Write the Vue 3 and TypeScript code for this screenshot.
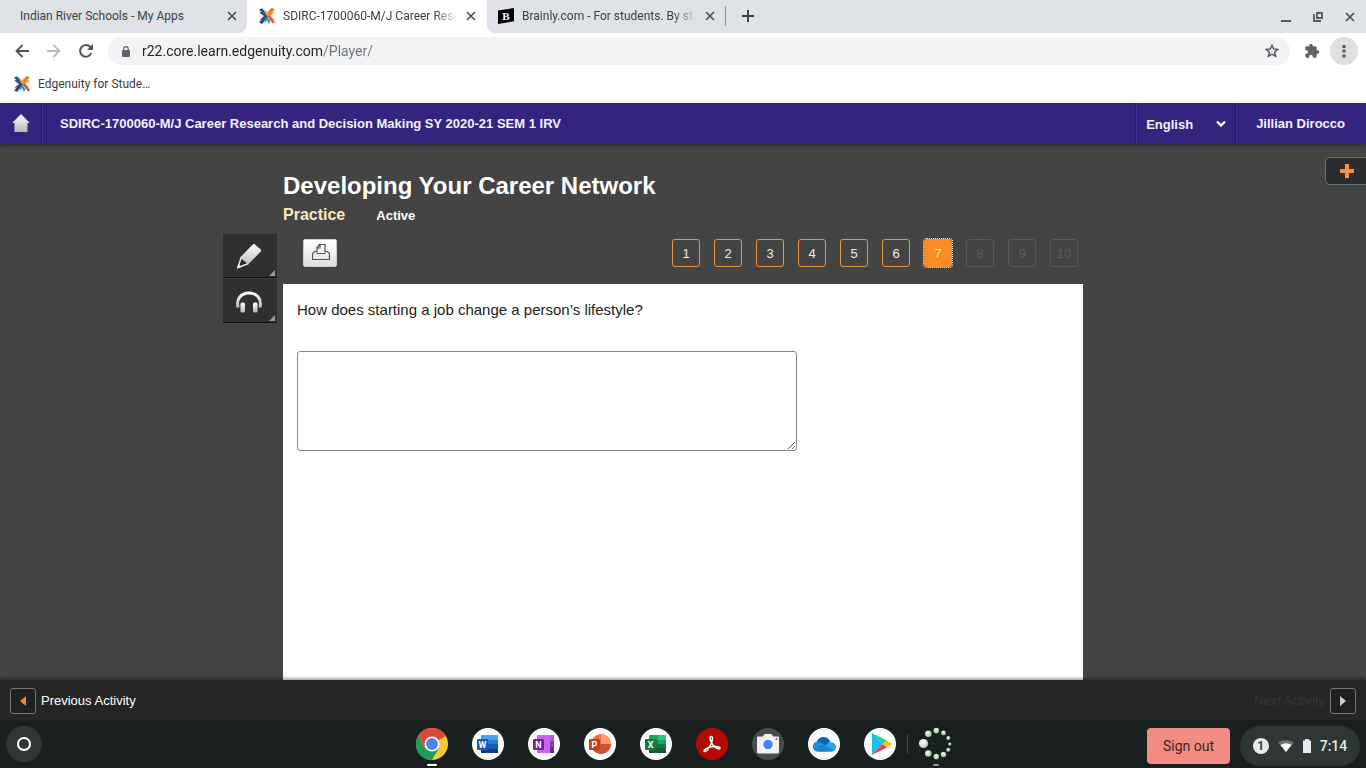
<script setup lang="ts">
import { ref } from 'vue'

interface Tab {
  title: string
  icon: 'none' | 'edgenuity' | 'brainly'
  active: boolean
}

interface Question {
  n: number
  state: 'open' | 'current' | 'locked'
}

const tabs: Tab[] = [
  { title: 'Indian River Schools - My Apps', icon: 'none', active: false },
  { title: 'SDIRC-1700060-M/J Career Rese', icon: 'edgenuity', active: true },
  { title: 'Brainly.com - For students. By st', icon: 'brainly', active: false },
]

const questions: Question[] = Array.from({ length: 10 }, (_, i) => ({
  n: i + 1,
  state: i < 6 ? 'open' : i === 6 ? 'current' : 'locked',
}))

const apps: string[] = ['Chrome', 'Word', 'OneNote', 'PowerPoint', 'Excel', 'Acrobat', 'Camera', 'OneDrive', 'Play Store', 'Loading app']

const dots = [
  { x: 3.5, y: 15.5, r: 4.6 },
  { x: 8.3, y: 5.8, r: 3.3 },
  { x: 16.3, y: 2.6, r: 2.8 },
  { x: 23.5, y: 4.9, r: 2.4 },
  { x: 28.3, y: 10, r: 2 },
  { x: 29.8, y: 16, r: 1.6 },
  { x: 28.3, y: 21.8, r: 2 },
  { x: 23.5, y: 26.5, r: 2.7 },
  { x: 16.3, y: 28.6, r: 2.8 },
  { x: 8.3, y: 25.5, r: 3.3 },
]

const url = ref('r22.core.learn.edgenuity.com/Player/')
const language = ref('English')
const answer = ref('')
</script>

<template>
  <div class="screen">
    <svg class="defs" width="0" height="0" aria-hidden="true">
      <defs>
        <symbol id="edge" viewBox="0 0 16 16">
          <path d="M0 1.5 3.2.3 7.7 6 6 8.2z" fill="#28567b" />
          <path d="M0 4.5 5 8 0 12.2 3.4 11 7 8 3 4z" fill="#3b4a8b" />
          <path d="M16 1 12.4 0 8 5.8 10 8.2z" fill="#ee7a31" />
          <path d="M16 4.2 10.8 8l5.2 3.8-3.5-.5L9 8l3.6-3.4z" fill="#f0913f" />
          <path d="M0 14.4 3.2 16 9 8.2 7.4 6z" fill="#314778" />
          <path d="M5 16 8 7.8l3.4 5.6L10 16 8 12.3z" fill="#25a3a5" />
          <path d="M8.2 8 14 15.7l2-1.8-5-6.5z" fill="#e35542" />
          <path d="M5 1 8 4.4 11 1 9.8 5.6 8 7.8 6.3 5.7z" fill="#e8a23d" />
        </symbol>
        <symbol id="cross" viewBox="0 0 10 10">
          <path d="M1 1l8 8M9 1 1 9" stroke="#45494d" stroke-width="1.6" fill="none" />
        </symbol>
        <linearGradient id="silver" x1="0" y1="0" x2="0" y2="1">
          <stop offset="0" stop-color="#fff" />
          <stop offset="1" stop-color="#b8b8b8" />
        </linearGradient>
        <radialGradient id="pearl" cx=".4" cy=".35" r=".7">
          <stop offset="0" stop-color="#fff" />
          <stop offset=".6" stop-color="#dfe0df" />
          <stop offset="1" stop-color="#a9b0aa" />
        </radialGradient>
        <radialGradient id="greenPearl" cx=".4" cy=".35" r=".7">
          <stop offset="0" stop-color="#f4fff3" />
          <stop offset="1" stop-color="#8fc08e" />
        </radialGradient>
      </defs>
    </svg>

    <div class="tabstrip">
      <div v-for="t in tabs" :key="t.title" class="tab" :class="{ active: t.active }">
        <svg v-if="t.icon === 'edgenuity'" class="favicon" viewBox="0 0 16 16"><use href="#edge" /></svg>
        <svg v-else-if="t.icon === 'brainly'" class="favicon" viewBox="0 0 16 16">
          <path d="M0 2.5 16 0v13.2L0 16z" fill="#000" />
          <text x="8" y="12" text-anchor="middle" class="serif-mark">B</text>
        </svg>
        <span class="tab-title" :class="{ fade: t.icon !== 'none' }">{{ t.title }}</span>
        <button class="plain close" aria-label="Close tab"><svg width="10" height="10"><use href="#cross" /></svg></button>
      </div>
      <button class="plain new-tab" aria-label="New tab">
        <svg width="12" height="12" viewBox="0 0 12 12"><path d="M6 0v12M0 6h12" stroke="#3c4043" stroke-width="2" /></svg>
      </button>
      <div class="window-buttons">
        <button class="plain" aria-label="Minimize"><svg width="10" height="12" viewBox="0 0 10 12"><path d="M0 10h10" stroke="#55595d" stroke-width="2" /></svg></button>
        <button class="plain" aria-label="Restore"><svg width="10" height="10" viewBox="0 0 10 10"><path d="M4 1h5v5H4zM1 2v7h7" stroke="#55595d" stroke-width="1.8" fill="none" /></svg></button>
        <button class="plain" aria-label="Close window"><svg width="10" height="10"><use href="#cross" /></svg></button>
      </div>
    </div>

    <div class="toolbar">
      <button class="plain nav" aria-label="Back"><svg width="14" height="14" viewBox="0 0 14 14"><path d="M14 7H1.5M7.5 1l-6 6 6 6" stroke="#505458" stroke-width="1.8" fill="none" /></svg></button>
      <button class="plain nav" aria-label="Forward"><svg width="14" height="14" viewBox="0 0 14 14"><path d="M0 7h12.5M6.5 1l6 6-6 6" stroke="#babcbe" stroke-width="1.8" fill="none" /></svg></button>
      <button class="plain nav" aria-label="Reload"><svg width="14" height="14" viewBox="0 0 14 14"><path d="M12.3 9.1A5.8 5.8 0 1 1 11.3 3L12 3.8" stroke="#505458" stroke-width="2" fill="none" /><path d="M14 0v6H8z" fill="#505458" /></svg></button>
      <div class="omnibox">
        <svg width="8" height="11" viewBox="0 0 8 11"><rect y="4" width="8" height="7" rx="1" fill="#5f6368" /><path d="M1.8 5V2.8a2.2 2.2 0 0 1 4.4 0V5" stroke="#5f6368" stroke-width="1.2" fill="none" /></svg>
        <div class="address">
          <input v-model="url" class="url" aria-label="Address" spellcheck="false" />
        </div>
        <button class="plain star" aria-label="Bookmark this page"><svg width="14" height="14" viewBox="0 0 14 14"><path d="M7 1.2 8.7 5l4.2.4-3.2 2.8 1 4.1L7 10.1l-3.7 2.2 1-4.1L1.1 5.4 5.3 5z" stroke="#505458" stroke-width="1.4" fill="none" /></svg></button>
      </div>
      <button class="plain nav ext" aria-label="Extensions"><svg width="16" height="16" viewBox="0 0 24 24"><path fill="#5f6368" d="M20.5 11H19V7c0-1.1-.9-2-2-2h-4V3.5a2.5 2.5 0 0 0-5 0V5H4c-1.1 0-2 .9-2 2v3.8h1.500a2.700 2.700 0 0 1 0 5.400H2V20c0 1.100.9 2 2 2h3.800v-1.500a2.700 2.700 0 0 1 5.400 0V22H17c1.100 0 2-.9 2-2v-4h1.500a2.500 2.500 0 0 0 0-5z" /></svg></button>
      <button class="plain more" aria-label="Browser menu"><svg width="4" height="14" viewBox="0 0 4 14"><path d="M.5 1h3v3h-3zM.5 5.500h3v3h-3zM.5 10.500h3v3h-3z" fill="#55595d" /></svg></button>
    </div>

    <div class="bookmarks">
      <a href="#" class="bookmark"><svg class="favicon" viewBox="0 0 16 16"><use href="#edge" /></svg>Edgenuity for Stude…</a>
    </div>

    <header class="course-bar">
      <a href="#" class="home" aria-label="Home"><svg width="18" height="18" viewBox="0 0 18 18"><path d="M9 0 18 9h-2.500v9h-13V9H0z" fill="url(#silver)" /></svg></a>
      <span class="course">SDIRC-1700060-M/J Career Research and Decision Making SY 2020-21 SEM 1 IRV</span>
      <div class="language">
        <select v-model="language" aria-label="Language">
          <option>English</option>
          <option>Español</option>
        </select>
        <svg width="10" height="8" viewBox="0 0 10 8"><path d="M1 1.500l4 4 4-4" stroke="#fff" stroke-width="2.400" fill="none" /></svg>
      </div>
      <a href="#" class="user">Jillian Dirocco</a>
    </header>

    <main class="stage">
      <button class="plain add" aria-label="Open tools"><svg width="14" height="14" viewBox="0 0 14 14"><path d="M5 0h4v5h5v4H9v5H5V9H0V5h5z" fill="#f39443" /></svg></button>
      <div class="columns">
        <div class="rail">
          <button class="plain tool" aria-label="Highlighter">
            <svg width="26" height="26" viewBox="0 0 26 26"><path d="m19 1.500 5.500 4.800c.8.700.8 1.700.1 2.400L13 20.500 8 22.500 4 17l2-4.500L16.500 1.800c.8-.8 1.700-1 2.500-.3z" fill="url(#silver)" /><path d="m4.500 15 8 6.500L2 25z" fill="#292929" /><path d="M5.500 13.500 2 24.500l10.500-4" stroke="#e4e4e4" stroke-width="1.500" fill="none" /><path d="m1 25.500 1.300-4.500 3 3z" fill="#fff" /></svg>
            <span class="corner"></span>
          </button>
          <button class="plain tool" aria-label="Read aloud">
            <svg width="26" height="22" viewBox="0 0 26 22"><path d="M2.200 16.500C-.4 8 5.500 2 13 2s13.400 6 10.800 14.500" stroke="url(#silver)" stroke-width="3" fill="none" /><rect x="4.500" y="11.500" width="4.500" height="10" rx="1.500" fill="url(#silver)" /><rect x="17" y="11.500" width="4.500" height="10" rx="1.500" fill="url(#silver)" /></svg>
            <span class="corner"></span>
          </button>
        </div>
        <section class="lesson">
          <h1>Developing Your Career Network</h1>
          <div class="sub"><h2>Practice</h2><span>Active</span></div>
          <div class="controls">
            <button class="plain print" aria-label="Print"><svg width="18" height="16" viewBox="0 0 18 16"><path d="M5 8.500V3.500l2.500-3H13v8M5 4h3V.5M4.500 7.500h-2l-2 2v6h17v-6l-2-2h-2M4.500 9.500h9" stroke="#505050" stroke-width="1.200" fill="none" /></svg></button>
            <nav class="questions" aria-label="Questions">
              <button v-for="q in questions" :key="q.n" class="plain question" :class="q.state" :disabled="q.state === 'locked'">{{ q.n }}</button>
            </nav>
          </div>
          <div class="paper">
            <label for="answer">How does starting a job change a person’s lifestyle?</label>
            <textarea id="answer" v-model="answer"></textarea>
          </div>
        </section>
      </div>
    </main>

    <footer class="activity-bar">
      <button class="plain step"><span class="step-box"><svg width="6" height="10" viewBox="0 0 6 10"><path d="M6 0v10L0 5z" fill="#ef8634" /></svg></span>Previous Activity</button>
      <button class="plain step next" disabled>Next Activity<span class="step-box"><svg width="6" height="10" viewBox="0 0 6 10"><path d="M0 0v10l6-5z" fill="#d0d0d0" /></svg></span></button>
    </footer>

    <div class="shelf">
      <button class="plain launcher" aria-label="Launcher"><span></span></button>
      <div class="apps">
        <button v-for="a in apps" :key="a" class="plain app" :class="{ running: a === 'Chrome', loading: a === 'Loading app' }" :aria-label="a">
          <svg width="32" height="32" viewBox="0 0 32 32">
            <g v-if="a === 'Chrome'">
              <circle cx="16" cy="16" r="16" fill="#fcc934" />
              <path d="M16 16 2.140 8A16 16 0 0 1 29.860 8z" fill="#d9493c" />
              <path d="M16 8h13.860A16 16 0 0 0 2.140 8L9 20z" fill="#d9493c" />
              <path d="M2.140 8A16 16 0 0 0 16 32l7-12-7 3-7-3z" fill="#25995a" />
              <circle cx="16" cy="16" r="7.500" fill="#fff" /><circle cx="16" cy="16" r="5.900" fill="#4a86e8" />
            </g>
            <g v-else-if="a === 'Word'">
              <circle cx="16" cy="16" r="16" fill="#fff" /><rect x="9" y="7" width="17" height="18" rx="1" fill="#185abd" /><path d="M9 7h17v5H9z" fill="#41a5ee" /><path d="M9 12h17v4H9z" fill="#2b7cd3" /><path d="M9 21h17v4H9z" fill="#103f91" /><rect x="5" y="11" width="11" height="11" rx="1" fill="#185abd" /><text x="10.500" y="19.500" text-anchor="middle" class="mark">W</text>
            </g>
            <g v-else-if="a === 'OneNote'">
              <circle cx="16" cy="16" r="16" fill="#fff" /><rect x="9" y="7" width="17" height="18" rx="1" fill="#ca64ea" /><path d="M22 7h4v6h-4z" fill="#b757dc" /><path d="M22 13h4v6h-4z" fill="#9332bf" /><path d="M22 19h4v6h-4z" fill="#7719aa" /><rect x="5" y="11" width="11" height="11" rx="1" fill="#7719aa" /><text x="10.500" y="19.500" text-anchor="middle" class="mark">N</text>
            </g>
            <g v-else-if="a === 'PowerPoint'">
              <circle cx="16" cy="16" r="16" fill="#fff" /><circle cx="17" cy="16" r="10" fill="#ed6c47" /><path d="M17 6a10 10 0 0 1 10 10H17z" fill="#ff9c78" /><path d="M7 16h20a10 10 0 0 1-20 0z" fill="#d35230" /><rect x="5" y="11" width="11" height="11" rx="1" fill="#c43e1c" /><text x="10.500" y="19.500" text-anchor="middle" class="mark">P</text>
            </g>
            <g v-else-if="a === 'Excel'">
              <circle cx="16" cy="16" r="16" fill="#fff" /><rect x="9" y="7" width="17" height="18" rx="1" fill="#21a366" /><path d="M18 7h8v5h-8z" fill="#33c481" /><path d="M9 12h9v8H9z" fill="#107c41" /><path d="M9 20h17v5H9z" fill="#185c37" /><path d="M18 16h8v4h-8z" fill="#107c41" /><rect x="5" y="11" width="11" height="11" rx="1" fill="#107c41" /><text x="10.500" y="19.500" text-anchor="middle" class="mark">X</text>
            </g>
            <g v-else-if="a === 'Acrobat'">
              <circle cx="16" cy="16" r="16" fill="#b30b00" /><path d="M15 8.500c2.500 0 1.500 4.500-.5 8.500-2 4-4.500 7-6 6.500-1.800-1 2.500-4 7-4.700 4.300-.7 8.700-.2 8.500 1.400-.3 1.800-4.800-.2-7.200-3.200-2.200-2.700-3.800-8.500-1.800-8.500z" stroke="#fff" stroke-width="1.500" fill="none" />
            </g>
            <g v-else-if="a === 'Camera'">
              <circle cx="16" cy="16" r="16" fill="#4a4b4f" /><path d="M6 8.500h5L12.500 6h7L21 8.500h5a1 1 0 0 1 1 1V24a1.500 1.500 0 0 1-1.500 1.500h-19A1.500 1.500 0 0 1 5 24V9.500a1 1 0 0 1 1-1z" fill="#f1f1f1" /><circle cx="16" cy="16.500" r="6" fill="#fff" /><circle cx="16" cy="16.500" r="4.800" fill="#4285f4" /><circle cx="24.500" cy="11" r="1" fill="#6b7078" />
            </g>
            <g v-else-if="a === 'OneDrive'">
              <circle cx="16" cy="16" r="16" fill="#fff" /><path d="M9 14a7 7 0 0 1 12.500-2l1 3L15 20 7 14.500z" fill="#0364b8" /><path d="M9.500 13.500a6 6 0 0 1 4 1l10 6-5 3H10a5 5 0 0 1-.5-10z" fill="#1490df" /><path d="M20.500 13.500a4.500 4.500 0 0 1 3 1 4.500 4.500 0 0 1 .5 9H10l8-5z" fill="#28a8ea" /><path d="m15.500 16.500 10.500 6c-1 .8-1.500 1-3 1H10c-1.500 0-3-.8-3.800-2z" fill="#1686d2" /><path d="M9 14a7 7 0 0 1 12-2c-3 .5-4.500 2-5.500 4.500-1.500-1.500-3.500-2.800-6.500-2.500z" fill="#0868b7" />
            </g>
            <g v-else-if="a === 'Play Store'">
              <circle cx="16" cy="16" r="16" fill="#fff" /><path d="m8 5 10.500 11L8 27z" fill="#19bde9" /><path d="M8 5l15 7.500-4.500 4z" fill="#1fd4a2" /><path d="M8 27l15-7.500-4.500-3.500z" fill="#e53e58" /><path d="m23 12.500 5.500 3.500-5.500 3.500-4.500-3.500z" fill="#fbbc1c" />
            </g>
            <g v-else>
              <circle v-for="(d, i) in dots" :key="i" :cx="d.x" :cy="d.y" :r="d.r" :fill="i === 0 ? 'url(#pearl)' : 'url(#greenPearl)'" />
            </g>
          </svg>
        </button>
      </div>
      <div class="status">
        <button class="plain sign-out">Sign out</button>
        <button class="plain tray" aria-label="Status tray, 7:14">
          <span class="count">1</span>
          <svg width="16" height="12" viewBox="0 0 16 12"><path d="M0 2.500Q8-2 16 2.500L8 12z" fill="#6b7575" /><path d="M2.500 5Q8 1.500 13.500 5L8 12z" fill="#fff" /></svg>
          <svg width="8" height="14" viewBox="0 0 8 14"><path d="M2 0h4v1.500h2V14H0V1.500h2z" fill="#e8eaed" /></svg>
          <span class="time">7:14</span>
        </button>
      </div>
    </div>
  </div>
</template>

<style>
body {
  margin: 0;
}
</style>

<style scoped>
.screen {
  display: flex;
  flex-direction: column;
  height: 100vh;
  overflow: hidden;
  font-family: Roboto, sans-serif;
  font-size: 12px;
  color: #3c4043;
  background: #fff;
}
.screen * {
  box-sizing: border-box;
}
.defs {
  position: absolute;
}
svg {
  display: block;
  flex: none;
}
a {
  color: inherit;
  text-decoration: none;
}
.plain {
  display: flex;
  align-items: center;
  justify-content: center;
  padding: 0;
  border: 0;
  background: none;
  font: inherit;
  color: inherit;
  cursor: pointer;
}
.serif-mark {
  font: bold 11px "Liberation Serif", serif;
  fill: #fff;
}
.mark {
  font: bold 9px Roboto, sans-serif;
  fill: #fff;
}
.favicon {
  width: 16px;
  height: 16px;
}

/* Browser frame */
.tabstrip {
  display: flex;
  flex: none;
  height: 33px;
  background: #fff;
}
.tab {
  display: flex;
  align-items: center;
  flex: 0 1 240px;
  min-width: 0;
  gap: 8px;
  padding: 0 10px 2px 11px;
  background: #dee1e6;
}
.tab:first-child {
  flex-basis: 247px;
  padding-left: 20px;
  border-bottom-right-radius: 8px;
}
.tab.active {
  padding-left: 12px;
  padding-right: 11px;
  background: #fff;
}
.tab:nth-child(3) {
  flex-basis: 238px;
  border-bottom-left-radius: 8px;
}
.tab-title {
  flex: 1;
  min-width: 0;
  overflow: hidden;
  white-space: nowrap;
}
.tab-title.fade {
  mask-image: linear-gradient(to left, transparent, #000 24px);
}
.close {
  width: 10px;
  height: 16px;
}
.new-tab {
  padding: 0 17px 2px;
  background: linear-gradient(#8a8d91, #8a8d91) 0 6px / 1px 20px no-repeat #dee1e6;
}
.window-buttons {
  display: flex;
  flex: 1;
  align-items: center;
  justify-content: flex-end;
  gap: 22px;
  padding-right: 11px;
  background: #dee1e6;
}
.toolbar {
  display: flex;
  flex: none;
  align-items: center;
  height: 36px;
  padding: 0 8px 0 6px;
}
.nav {
  width: 32px;
  height: 28px;
}
.omnibox {
  display: flex;
  flex: 1;
  align-items: center;
  gap: 12px;
  height: 28px;
  margin-left: 6px;
  padding: 0 11px 0 14px;
  border-radius: 14px;
  background: #f1f3f4;
}
.address {
  flex: 1;
}
.url {
  display: block;
  width: 100%;
  padding: 0;
  border: 0;
  outline: 0;
  font: 14px/20px Roboto, sans-serif;
  color: transparent;
  background: linear-gradient(90deg, #202124 181px, #6f7377 181px);
  background-clip: text;
}
.ext {
  margin-left: 6px;
}
.more {
  width: 28px;
  height: 28px;
  margin-left: 2px;
  border-radius: 50%;
  background: #dfdfdf;
}
.bookmarks {
  display: flex;
  flex: none;
  height: 34px;
  padding: 0 14px 4px;
}
.bookmark {
  display: flex;
  align-items: center;
  gap: 8px;
}

/* Course header */
.course-bar {
  position: relative;
  z-index: 1;
  display: flex;
  flex: none;
  align-items: stretch;
  height: 41px;
  font: bold 13px/41px "Liberation Sans", Arial, sans-serif;
  color: #f4f2fa;
  background: #35247f;
  box-shadow: 0 1px 3px rgba(0, 0, 0, 0.4);
}
.home {
  display: flex;
  align-items: center;
  justify-content: center;
  width: 42px;
  padding-bottom: 2px;
  border-right: 1px solid #281b63;
}
.course {
  flex: 1;
  padding-left: 17px;
  border-left: 1px solid #43328f;
}
.language {
  display: grid;
  grid-template-columns: 90px 10px;
  align-items: center;
  justify-content: start;
  width: 100px;
  border-left: 1px solid #281b63;
  box-shadow: inset 1px 0 #43328f;
}
.language select {
  grid-area: 1 / 1 / 2 / 3;
  height: 40px;
  width: 98px;
  padding: 0 0 0 10px;
  border: 0;
  appearance: none;
  background: none;
  font: inherit;
  color: inherit;
}
.language svg {
  grid-area: 1 / 1;
  justify-self: end;
  pointer-events: none;
}
.user {
  padding: 0 21px 0 20px;
  border-left: 1px solid #281b63;
  box-shadow: inset 1px 0 #43328f;
}

/* Lesson */
.stage {
  position: relative;
  display: flex;
  flex: 1;
  flex-direction: column;
  min-height: 0;
  font-family: "Liberation Sans", Arial, sans-serif;
  background: #444;
}
.add {
  position: absolute;
  top: 13px;
  right: 0;
  width: 41px;
  height: 28px;
  padding-left: 2px;
  border: 1px solid #647176;
  border-right: 0;
  border-radius: 5px 0 0 5px;
  background: #2b2c2d;
}
.columns {
  display: grid;
  grid-template-columns: 54px minmax(0, 800px) 54px;
  flex: 1;
  justify-content: center;
  gap: 6px;
  min-height: 0;
}
.rail {
  padding-top: 90px;
}
.tool {
  position: relative;
  width: 54px;
  height: 44px;
  padding-right: 2px;
  border-bottom: 1px solid #111;
  background: #303030;
}
.tool + .tool {
  height: 45px;
  padding-top: 2px;
  border-top: 1px solid #414141;
}
.corner {
  position: absolute;
  right: 2px;
  bottom: 1px;
  border: 3px solid transparent;
  border-right-color: #999;
  border-bottom-color: #999;
}
.lesson {
  display: flex;
  flex-direction: column;
  min-height: 0;
  padding-top: 28px;
}
h1 {
  margin: 0;
  font-size: 24px;
  line-height: 28px;
  color: #fff;
}
.sub {
  display: flex;
  align-items: baseline;
  gap: 31px;
  height: 25px;
  padding-top: 5px;
  font-size: 13px;
  font-weight: bold;
  line-height: 20px;
  color: #fff;
}
h2 {
  margin: 0;
  font-size: 16px;
  line-height: 20px;
  color: #fbe9bd;
}
.controls {
  display: flex;
  align-items: flex-start;
  justify-content: space-between;
  height: 59px;
  padding: 14px 5px 0 20px;
}
.print {
  width: 34px;
  height: 28px;
  padding: 0 0 2px 2px;
  border: 1px solid #ccc;
  border-radius: 2px;
  background: linear-gradient(#fff, #ddd);
}
.questions {
  display: flex;
  gap: 14px;
}
.question {
  width: 28px;
  height: 28px;
  border: 1px solid #e8963f;
  border-radius: 3px;
  font-size: 13px;
  color: #eee;
}
.question.current {
  background: #f78e25;
  border-color: #f78e25;
  outline: 1px dotted #fff;
  color: #fde3c2;
}
.question.locked {
  border-color: #595959;
  color: #5c5c5c;
}
.paper {
  flex: 1;
  padding: 16px 14px;
  background: #fff;
}
.paper label {
  display: block;
  margin-bottom: 31px;
  font-size: 15px;
  line-height: 20px;
  color: #222;
}
.paper textarea {
  display: block;
  width: 500px;
  max-width: 100%;
  height: 100px;
  border: 1px solid #858585;
  border-radius: 3px;
  outline: 0;
  font: 15px/20px "Liberation Sans", Arial, sans-serif;
}
.activity-bar {
  position: relative;
  display: flex;
  flex: none;
  align-items: center;
  justify-content: space-between;
  height: 40px;
  padding: 2px 10px 0;
  font: 13px/20px "Liberation Sans", Arial, sans-serif;
  background: #262626;
  box-shadow: 0 -1px 4px rgba(0, 0, 0, 0.5);
}
.step {
  gap: 5px;
  color: #fff;
}
.step.next {
  color: #363636;
}
.step-box {
  display: flex;
  align-items: center;
  justify-content: center;
  width: 26px;
  height: 26px;
  border: 1px solid #777;
  border-radius: 3px;
  background: #202020;
}

/* System shelf */
.shelf {
  position: relative;
  display: grid;
  grid-template-columns: 1fr auto 1fr;
  align-items: center;
  flex: none;
  height: 48px;
  padding: 0 6px;
  background: #19201f;
}
.launcher {
  width: 36px;
  height: 36px;
  border-radius: 50%;
  background: #303837;
}
.launcher span {
  width: 14px;
  height: 14px;
  border: 2px solid #fff;
  border-radius: 50%;
}
.apps {
  display: flex;
  gap: 24px;
  padding-left: 2px;
}
.app {
  position: relative;
  width: 32px;
  height: 32px;
}
.app svg {
  overflow: visible;
}
.app.running::after,
.app.loading::after {
  content: "";
  position: absolute;
  left: 11px;
  bottom: -6px;
  width: 10px;
  height: 2px;
  border-radius: 1px;
  background: #fff;
}
.app.loading::after {
  left: 13px;
  width: 6px;
  background: #999;
}
.app.loading::before {
  content: "";
  position: absolute;
  left: -13px;
  top: 6px;
  width: 1px;
  height: 20px;
  background: #454d4c;
}
.status {
  display: flex;
  align-items: center;
  justify-content: flex-end;
  gap: 10px;
  padding-top: 4px;
}
.sign-out {
  width: 83px;
  height: 36px;
  border-radius: 4px;
  font-size: 14px;
  color: #3b2523;
  background: #f28b82;
}
.tray {
  gap: 9px;
  width: 120px;
  height: 40px;
  border-radius: 20px;
  font-size: 14px;
  font-weight: 500;
  color: #e8eaed;
  background: #2f3736;
}
.count {
  width: 16px;
  height: 16px;
  border-radius: 50%;
  font-size: 12px;
  font-weight: 700;
  line-height: 16px;
  color: #2f3736;
  background: #e8eaed;
}
</style>
